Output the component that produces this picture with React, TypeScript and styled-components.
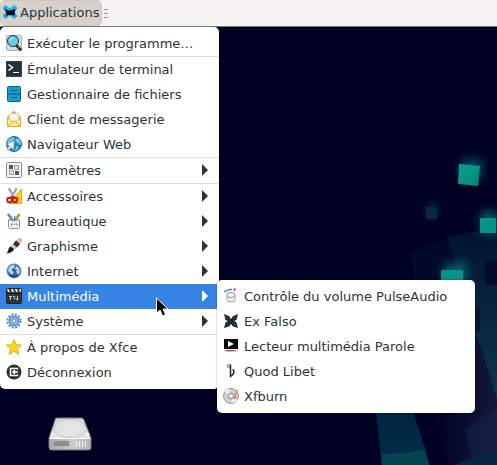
import React from "react";
import styled, { createGlobalStyle, css } from "styled-components";

const GlobalStyle = createGlobalStyle`
  *, *::before, *::after { box-sizing: border-box; }
  body {
    margin: 0;
    background: #000022;
    font-family: "DejaVu Sans", Verdana, sans-serif;
    font-size: 13px;
    color: #2e3436;
  }
`;

const Screen = styled.div`
  display: flex;
  flex-direction: column;
  min-height: 100vh;
  overflow: hidden;
`;

const Panel = styled.header`
  display: flex;
  align-items: center;
  height: 27px;
  background: #f5f4f2;
  border-bottom: 1px solid #77767b;
`;

const AppsButton = styled.button`
  display: flex;
  align-items: center;
  gap: 2px;
  height: 26px;
  padding: 0 2px 2px 1px;
  border: 1px solid #cdc7c2;
  border-radius: 5px;
  background: #d6d1cd;
  color: inherit;
  font: inherit;
  white-space: nowrap;
`;

const PanelHandle = styled.span`
  display: grid;
  gap: 3px;
  margin-left: 2px;
  &::before, &::after, i { content: ""; width: 4px; height: 1px; background: #929595; }
`;

const Desktop = styled.main`
  position: relative;
  flex: 1;
`;

const Wallpaper = styled.svg`
  position: absolute;
  inset: 0;
  width: 100%;
  height: 100%;
`;

const DriveButton = styled.button`
  position: absolute;
  left: 46px;
  top: 388px;
  padding: 0;
  border: 0;
  background: none;
  line-height: 0;
`;

const menuSurface = css`
  padding: 4px 0;
  background: #ffffff;
  border-radius: 5px;
`;

const Menu = styled.nav`
  ${menuSurface}
  position: relative;
  width: 219px;
`;

const SubMenu = styled.div`
  ${menuSurface}
  position: absolute;
  left: 217px;
  top: -4px;
  width: 258px;
  box-shadow: 0 0 2px rgba(0, 0, 0, 0.4);
`;

const MenuGroup = styled.div`
  & + & { border-top: 1px solid #dfdfdf; }
`;

const MenuEntry = styled.div`
  position: relative;
`;

const MenuItem = styled.button<{ $active?: boolean }>`
  display: flex;
  align-items: center;
  gap: 5px;
  width: 100%;
  height: 25px;
  padding: 0 10px 1px 6px;
  border: 0;
  background: ${(p) => (p.$active ? "#3584e4" : "transparent")};
  color: ${(p) => (p.$active ? "#ffffff" : "#2e3436")};
  font: inherit;
  text-align: left;
  white-space: nowrap;
`;

const Label = styled.span`
  flex: 1;
`;

const Icon = styled.svg`
  flex: none;
  width: 16px;
  height: 16px;
  overflow: visible;
`;

const Arrow = styled.svg`
  flex: none;
  width: 7px;
  height: 12px;
  fill: currentColor;
`;

const Pointer = styled.svg`
  position: absolute;
  left: 156px;
  top: 13px;
  width: 13px;
  height: 20px;
  pointer-events: none;
`;

const XfceIcon = () => (
  <Icon viewBox="0 0 16 16">
    <path d="M3.5 1 8 4.500 12.500 1 15.500 4 12.500 8 15.500 12 12.500 15 8 11.500 3.500 15 .5 12 3.500 8 .5 4z" fill="#16b0e8" />
    <path d="M2.500 4.500 5.500 6.500h4l3.500-1.500.5 1-1 1.500.5 2.500-1 2-1.500-1H6l-2 1.500L4.500 8.500z" fill="#07090b" />
  </Icon>
);

const SearchIcon = () => (
  <Icon viewBox="0 0 16 16">
    <rect x=".5" y=".5" width="15" height="15" rx="1" fill="#d3dae3" stroke="#a9b1ba" />
    <path d="m10.500 10.500 4 4" stroke="#121b20" strokeWidth="2.500" strokeLinecap="round" />
    <path d="m12 11.500 2 2" stroke="#c2a832" strokeWidth="1" />
    <circle cx="7" cy="6" r="5.500" fill="#67c9ee" stroke="#1d3844" strokeWidth="1" />
    <path d="M3.500 6a4 4 0 0 1 4-3" fill="none" stroke="#a8e5fa" strokeWidth="1.500" />
  </Icon>
);

const TerminalIcon = () => (
  <Icon viewBox="0 0 16 16">
    <rect x=".5" y=".5" width="15" height="15" fill="#23303f" stroke="#35414e" />
    <path d="m2.500 3.500 4 3-4 3" fill="none" stroke="#fff" strokeWidth="1.500" />
    <path d="M7 11.500h6" stroke="#fff" />
  </Icon>
);

const CabinetIcon = () => (
  <Icon viewBox="0 0 16 16">
    <rect x="1.500" y=".5" width="13" height="15" rx="1" fill="#09a2d3" stroke="#1a5d7c" />
    <path d="M2 8h12" stroke="#17516c" />
    <path d="M5 4.500h6M5 11.500h6" stroke="#164158" />
  </Icon>
);

const MailIcon = () => (
  <Icon viewBox="0 0 16 16">
    <path d="M1.500 6 7 1q1-1 2 0l5.500 5v9h-13z" fill="#e9bd13" stroke="#dcae0a" />
    <path d="M3.500 2.500h9v7l-4.500 4-4.500-4z" fill="#f4f4f2" stroke="#d6d2bd" />
    <path d="m1.500 7 5 4-5 4zM14.500 7l-5 4 5 4z" fill="#fff0a2" stroke="#e0b622" />
    <path d="m1.500 15.500 5-5q1.500-1 3 0l5 5z" fill="#fae97b" stroke="#dfb41d" />
  </Icon>
);

const BrowserIcon = () => (
  <Icon viewBox="0 0 16 16">
    <circle cx="8" cy="8" r="7.500" fill="#1785bf" stroke="#1b6895" />
    <path d="m3 3 3-2 3 1-1 2-2 1-1 2-3 1-1-2zM9 4l2-2 3 2 1 4-2 1-1-2-2-1zM10 10l3 1-2 3-2 1z" fill="#72c9e9" />
    <path d="m8.500 4.500-1 10-2.300-3-3.200 3-1.500-1.500 3-3-3-2z" fill="#f1f3f4" stroke="#778a94" strokeWidth=".7" />
  </Icon>
);

const SettingsIcon = () => (
  <Icon viewBox="0 0 16 16">
    <rect x=".5" y=".5" width="15" height="15" rx="1" fill="#f5f5f5" stroke="#85888a" />
    <path d="M3 3h4v4H3zM9 9h4v4H9z" fill="#4d5457" />
    <path d="M8.500 3.500h4v4h-4zM3.500 8.500h4v4h-4z" fill="#e2e4e5" stroke="#9b9fa1" />
  </Icon>
);

const ScissorsIcon = () => (
  <Icon viewBox="0 0 16 16">
    <path d="M15.500 1v14.500H3z" fill="#f7d22a" stroke="#d6a90f" />
    <path d="M12.500 9v3.500H9z" fill="#fff7cf" stroke="#d6a90f" strokeWidth=".7" />
    <path d="M3 .5 8.500 10M10.500.5 5 10" stroke="#737980" strokeWidth="2" />
    <path d="M3.500 1 8 9M10 1 5.500 9" stroke="#d3d6d8" strokeWidth=".8" />
    <circle cx="3.500" cy="12" r="2.300" fill="none" stroke="#cf1717" strokeWidth="2" />
    <circle cx="9" cy="12" r="2.300" fill="none" stroke="#cf1717" strokeWidth="2" />
    <path d="m5 10 1.500-1.500L8 10" fill="none" stroke="#b31414" strokeWidth="1.500" />
  </Icon>
);

const OfficeIcon = () => (
  <Icon viewBox="0 0 16 16">
    <path d="m2 1 6 8" stroke="#4a83bb" strokeWidth="2.500" />
    <path d="m3.500 1.500 5 6.500" stroke="#9bc4e7" strokeWidth=".8" />
    <path d="M13.500 1 9 8" stroke="#bd8b4c" strokeWidth="2.500" />
    <path d="m9 3-1 5" stroke="#54616d" />
    <path d="M2.500 6.500 8 8l5.500-1.500v8l-1 1h-9l-1-1z" fill="#eceff2" stroke="#8695a5" />
    <path d="M5.500 13v-2q1-1 2 1M8.500 12q1-2 2.500-1v2" fill="none" stroke="#8696a7" />
  </Icon>
);

const BrushIcon = () => (
  <Icon viewBox="0 0 16 16">
    <path d="M13 .5q3 0 2.500 2.500L12 7 9 4.500z" fill="#efc89d" stroke="#ad7e53" strokeWidth=".7" />
    <path d="m10 2.500 4 3.500-3 3.500L7 6z" fill="#303334" />
    <path d="M7 6.500 10.500 9 8 11.500 4.500 9z" fill="#d4d6d7" stroke="#777" strokeWidth=".6" />
    <path d="M4.500 8.500 8 11c-1 3-4 4-7.500 4.500 2-2 1.500-5.500 4-7z" fill="#171a1b" />
  </Icon>
);

const GlobeIcon = () => (
  <Icon viewBox="0 0 16 16">
    <circle cx="8" cy="8" r="7" fill="#3568aa" stroke="#74859b" />
    <path d="m3 4 4-2 2 1-1 2-2 1v2l2 1-2 3-2-2-2-2zM10 3l3 2 1 4-2 2-2-2 1-2-2-1z" fill="#b5d2ef" />
    <path d="m5 4 3-2M11 12l2-2" stroke="#eaf5ff" />
    <path d="M4 12q4 3 8 0" fill="none" stroke="#1d4888" strokeWidth="2" />
  </Icon>
);

const ClapperIcon = () => (
  <Icon viewBox="0 0 16 16">
    <rect x=".5" y=".5" width="15" height="15" rx="1" fill="#303536" stroke="#202324" />
    <path d="M1 1h1.500l1.500 3H2zM5 1h2l1 3H6zM9 1h2l1 3h-2zM13 1h2v3h-1z" fill="#f4f4f4" />
    <path d="M1 5.500h14" stroke="#151718" />
    <path d="M3 8.500h3M4.500 8v4M7 8.500h2M7.500 10.500h2M10 11.500h2M11.500 8v3" fill="none" stroke="#c9ced0" />
  </Icon>
);

const GearIcon = () => (
  <Icon viewBox="0 0 16 16">
    <circle cx="8" cy="8" r="6.500" fill="none" stroke="#5688c0" strokeWidth="2" strokeDasharray="2 1.403" />
    <circle cx="8" cy="8" r="4.500" fill="#9cc4eb" stroke="#6597cf" strokeWidth="2" />
    <circle cx="8" cy="8" r="2" fill="#eef6fe" stroke="#5688c0" />
  </Icon>
);

const StarIcon = () => (
  <Icon viewBox="0 0 16 16">
    <path d="m8 .5 2.200 5.200 5.500.4-4.200 3.700 1.400 5.600L8 12.400l-4.900 3 1.400-5.600L.3 6.100l5.500-.4z" fill="#fbd51c" stroke="#dba90c" strokeWidth=".9" strokeLinejoin="round" />
  </Icon>
);

const LogoutIcon = () => (
  <Icon viewBox="0 0 16 16">
    <circle cx="8" cy="8" r="7.500" fill="#263238" />
    <path d="M11.500 5.500v-1h-7v7h7v-1" fill="none" stroke="#fff" strokeWidth="1.500" />
    <path d="M12 8H7M9 6 7 8l2 2" fill="none" stroke="#fff" strokeWidth="1.500" />
  </Icon>
);

const VolumeIcon = () => (
  <Icon viewBox="0 0 16 16">
    <path d="M1 4q4-3 8-2.500" fill="none" stroke="#4b82b8" strokeWidth="1.500" />
    <path d="M10.500.5h2v2h-2z" fill="#e5121b" />
    <path d="M4 7.500v4.500q0 2 4 2t4-2V7.500" fill="#ececec" stroke="#a0a0a0" />
    <ellipse cx="8" cy="7" rx="4" ry="2.500" fill="#fafafa" stroke="#949494" />
  </Icon>
);

const ExFalsoIcon = () => (
  <Icon viewBox="0 0 16 16">
    <path d="M1 1 6 3l2 3 2-3 5-2-1.500 6L11 8l2.500 1.500L15 15l-5-1.500L8 11l-2 2.500L1 15l1.500-5.500L5 8 2.500 7z" fill="#1c2930" />
    <path d="m2.500 2.500 3 3M13.500 2.500l-3 3M2.500 13.500l3-3M13.500 13.500l-3-3" stroke="#35505d" />
  </Icon>
);

const ParoleIcon = () => (
  <Icon viewBox="0 0 16 16">
    <rect x="1.500" y="1.500" width="13" height="12" rx="1" fill="#f0f0f0" stroke="#c6c6c6" />
    <path d="M1 1h14v10H1z" fill="#080808" />
    <path d="m5 3 6 3-6 3z" fill="#fff" />
    <path d="M3 12.500h8" stroke="#cf3b26" />
    <path d="M11 12.500h2" stroke="#aaa" />
  </Icon>
);

const QuodIcon = () => (
  <Icon viewBox="0 0 16 16">
    <circle cx="5.500" cy="3" r="1.500" fill="none" stroke="#55798b" />
    <path d="M7.500 1.500v12q4.500-3 3-6.500l-1-.5" fill="none" stroke="#1d2b32" strokeWidth="1.500" />
  </Icon>
);

const DiscIcon = () => (
  <Icon viewBox="0 0 16 16">
    <circle cx="8" cy="8" r="7.500" fill="#d1d1d1" stroke="#9c9c9c" />
    <path d="M8 8 2 4a7 7 0 0 1 4-3zM8 8l6 4a7 7 0 0 1-4 3z" fill="#f3f3f3" />
    <circle cx="8" cy="8" r="3" fill="#bfc3c5" stroke="#999c9e" />
    <circle cx="8" cy="8" r="1.500" fill="#fff" />
    <path d="m14.500 2-3 9" stroke="#df6a2d" strokeWidth="1.500" />
    <path d="m15 2-2.500 7" stroke="#f0b66e" strokeWidth=".8" />
  </Icon>
);

type Item = { label: string; icon: React.FC; submenu?: boolean };

const groups: Item[][] = [
  [{ label: "Exécuter le programme…", icon: SearchIcon }],
  [
    { label: "Émulateur de terminal", icon: TerminalIcon },
    { label: "Gestionnaire de fichiers", icon: CabinetIcon },
    { label: "Client de messagerie", icon: MailIcon },
    { label: "Navigateur Web", icon: BrowserIcon },
  ],
  [{ label: "Paramètres", icon: SettingsIcon, submenu: true }],
  [
    { label: "Accessoires", icon: ScissorsIcon, submenu: true },
    { label: "Bureautique", icon: OfficeIcon, submenu: true },
    { label: "Graphisme", icon: BrushIcon, submenu: true },
    { label: "Internet", icon: GlobeIcon, submenu: true },
    { label: "Multimédia", icon: ClapperIcon, submenu: true },
    { label: "Système", icon: GearIcon, submenu: true },
  ],
  [
    { label: "À propos de Xfce", icon: StarIcon },
    { label: "Déconnexion", icon: LogoutIcon },
  ],
];

const multimedia: Item[] = [
  { label: "Contrôle du volume PulseAudio", icon: VolumeIcon },
  { label: "Ex Falso", icon: ExFalsoIcon },
  { label: "Lecteur multimédia Parole", icon: ParoleIcon },
  { label: "Quod Libet", icon: QuodIcon },
  { label: "Xfburn", icon: DiscIcon },
];

const Background = () => (
  <Wallpaper viewBox="0 27 497 438" preserveAspectRatio="xMaxYMin slice" aria-hidden="true">
    <defs>
      <filter id="glow" x="-100%" y="-100%" width="300%" height="300%">
        <feGaussianBlur stdDeviation="5" />
      </filter>
      <linearGradient id="teal" x1="0" y1="0" x2="1" y2="1">
        <stop offset="0" stopColor="#08a095" />
        <stop offset="1" stopColor="#078579" />
      </linearGradient>
      <linearGradient id="wedge" x1="0" y1="0" x2="0" y2="1">
        <stop offset="0" stopColor="#002442" />
        <stop offset="1" stopColor="#032c4a" />
      </linearGradient>
      <linearGradient id="beam" gradientUnits="userSpaceOnUse" x1="0" y1="230" x2="0" y2="400">
        <stop offset="0" stopColor="#02132f" />
        <stop offset=".5" stopColor="#07253f" />
        <stop offset="1" stopColor="#12354d" />
      </linearGradient>
      <linearGradient id="violet" gradientUnits="userSpaceOnUse" x1="440" y1="0" x2="497" y2="0">
        <stop offset="0" stopColor="#020224" />
        <stop offset="1" stopColor="#121a3c" />
      </linearGradient>
    </defs>
    <path d="M0 27h497v438H0z" fill="#000022" />
    <path d="M410 255q18-11 37-17l16 55h-45z" fill="#010829" />
    <path d="M447 238q25-8 50-8v180l-22-79-14-51z" fill="url(#beam)" />
    <path d="M475 331q14 39 22 69v65h-49l-18-60h45z" fill="url(#violet)" />
    <path d="M465 430q17-13 32-22v43l-24 10z" fill="#16234a" opacity=".6" />
    <path d="M454 465q22-10 43-15v15z" fill="#08233f" />
    <path d="M375 405h37l18 60h-48z" fill="url(#wedge)" />
    <path d="M381 454q22 1 43-5l5 16h-47z" fill="#044451" />
    <path d="M412 409h20l17 56h-18z" fill="#000022" />
    <path d="M485 261h12v24h-12z" fill="#020c2a" />
    <path d="M475 307h5v24h-5z" fill="#07152f" />
    <g filter="url(#glow)" fill="#087078">
      <path d="m462 158 21 2-2 20-21-2z" opacity=".65" />
      <path d="M481 211h16v22h-16zM444 263h23v20h-23z" opacity=".8" />
      <path d="M426 204h12v14h-12z" opacity=".3" />
    </g>
    <path d="m459 164 21 2-2 20-20-2z" fill="url(#teal)" />
    <path d="M480 218h16v15h-16zM441 270h22v14h-22z" fill="url(#teal)" />
    <path d="M426 207h11v12h-11z" fill="#0b2740" />
  </Wallpaper>
);

const Drive = () => (
  <svg width="48" height="48" viewBox="0 0 48 48">
    <defs>
      <linearGradient id="lid" x1="0" y1="0" x2="0" y2="1">
        <stop stopColor="#d5d5d5" />
        <stop offset="1" stopColor="#f0f0f0" />
      </linearGradient>
      <linearGradient id="front">
        <stop stopColor="#a9a9a9" />
        <stop offset=".6" stopColor="#cdcdcd" />
        <stop offset="1" stopColor="#b2b2b2" />
      </linearGradient>
    </defs>
    <path d="M11 3h25q1 0 2 2l7 18v9q0 3-3 3H6q-3 0-3-3v-9L9 5q0-2 2-2z" fill="url(#lid)" stroke="#777" />
    <ellipse cx="24" cy="13.500" rx="16" ry="9" fill="#e2e2e2" stroke="#c9c9c9" />
    <path d="m15 18 13-12 8 4-15 12z" fill="#fff" opacity=".18" />
    <rect x="3.500" y="23.500" width="41" height="11" rx="1" fill="url(#front)" stroke="#999" />
    <path d="M4 23.500h40" stroke="#fff" />
    <rect x="8" y="26" width="15" height="5" fill="#8d8d8d" />
    <path d="M30.500 26v6M33.500 26v6M36.500 26v6M39.500 26v6" stroke="#f3f3f3" />
    <path d="M5 19h2M41 19h2" stroke="#fff" strokeWidth="2" />
  </svg>
);

export default function App() {
  return (
    <>
      <GlobalStyle />
      <Screen>
        <Panel>
          <AppsButton aria-haspopup="menu" aria-expanded="true">
            <XfceIcon />
            Applications
          </AppsButton>
          <PanelHandle><i /></PanelHandle>
        </Panel>
        <Desktop>
          <Background />
          <DriveButton aria-label="Disque">
            <Drive />
          </DriveButton>
          <Menu role="menu">
            {groups.map((group) => (
              <MenuGroup key={group[0].label} role="group">
                {group.map(({ label, icon: ItemIcon, submenu }) => {
                  const open = label === "Multimédia";
                  return (
                    <MenuEntry key={label}>
                      <MenuItem role="menuitem" $active={open}>
                        <ItemIcon />
                        <Label>{label}</Label>
                        {submenu && (
                          <Arrow viewBox="0 0 7 12">
                            <path d="M0 0 6 6 0 12z" />
                          </Arrow>
                        )}
                      </MenuItem>
                      {open && (
                        <>
                          <SubMenu role="menu">
                            {multimedia.map(({ label: name, icon: SubIcon }) => (
                              <MenuItem key={name} role="menuitem">
                                <SubIcon />
                                <Label>{name}</Label>
                              </MenuItem>
                            ))}
                          </SubMenu>
                          <Pointer viewBox="0 0 13 20">
                            <path d="M.5 1v15l3.500-3 2.500 6 3-1.500L7 12h5z" fill="#000" stroke="#fff" />
                          </Pointer>
                        </>
                      )}
                    </MenuEntry>
                  );
                })}
              </MenuGroup>
            ))}
          </Menu>
        </Desktop>
      </Screen>
    </>
  );
}
